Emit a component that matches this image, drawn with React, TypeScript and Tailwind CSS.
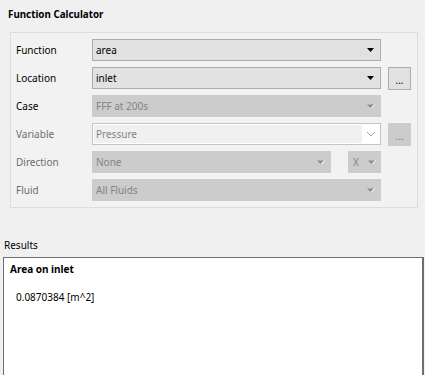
import React from "react";

const Arrow = ({ disabled }: { disabled?: boolean }) => (
  <svg width="9" height="6" viewBox="0 0 9 6" className="shrink-0">
    {disabled ? (
      <>
        <path d="M1 1.5 L8 1.5 L4.5 5 Z" fill="#8e8e8e" />
        <path d="M5.5 5 L8.5 1.5" stroke="#ffffff" strokeWidth="1" />
      </>
    ) : (
      <path d="M1 1 L8 1 L4.5 5 Z" fill="#000000" />
    )}
  </svg>
);

const Combo = ({
  text,
  disabled,
  width,
}: {
  text: string;
  disabled?: boolean;
  width: string;
}) => (
  <div
    className={`${width} h-[22px] flex items-center justify-between pl-[3px] pr-[5px] border ${
      disabled ? "bg-[#cccccc] border-[#cccccc] text-[#838383]" : "bg-[#e1e1e1] border-[#adadad] text-black"
    }`}
  >
    <span>{text}</span>
    <Arrow disabled={disabled} />
  </div>
);

const Dots = ({ disabled }: { disabled?: boolean }) => (
  <div
    className={`w-[23px] h-[23px] flex items-center justify-center border text-[10px] leading-none ${
      disabled ? "bg-[#cccccc] border-[#cccccc] text-[#838383]" : "bg-[#e1e1e1] border-[#adadad] text-black"
    }`}
  >
    <span className="pt-[4px]">...</span>
  </div>
);

const Row = ({
  label,
  disabled,
  children,
}: {
  label: string;
  disabled?: boolean;
  children: React.ReactNode;
}) => (
  <div className="flex items-center h-[22px]">
    <div className={`w-[76px] ${disabled ? "text-[#6d6d6d]" : "text-black"}`}>{label}</div>
    {children}
  </div>
);

export default function App() {
  return (
    <div
      className="w-[425px] h-[375px] bg-[#f0f0f0] overflow-hidden text-[10px] leading-[14px] text-black"
      style={{ fontFamily: '"Noto Sans", "Open Sans", sans-serif' }}
    >
      <div className="pl-[8px] pt-[8px] h-[32px] font-bold text-[9.8px]">Function Calculator</div>
      <div className="ml-[10px] w-[408px] h-[176px] border border-[#dcdcdc] bg-[#f2f2f2] pl-[5px] pt-[6px] flex flex-col gap-[6px]">
        <Row label="Function">
          <Combo text="area" width="w-[289px]" />
        </Row>
        <Row label="Location">
          <Combo text="inlet" width="w-[289px]" />
          <div className="ml-[7px]">
            <Dots />
          </div>
        </Row>
        <Row label="Case">
          <Combo text="FFF at 200s" disabled width="w-[289px]" />
        </Row>
        <Row label="Variable" disabled>
          <div className="w-[289px] h-[22px] flex items-center border border-[#c4c4c4] bg-white p-[1px]">
            <div className="w-[268px] h-full bg-[#f0f0f0] pl-[2px] flex items-center text-[#838383]">Pressure</div>
            <div className="flex-1 flex items-center justify-center">
              <svg width="10" height="6" viewBox="0 0 10 6">
                <path d="M1 1 L5 5 L9 1" fill="none" stroke="#a0a0a0" strokeWidth="1" />
              </svg>
            </div>
          </div>
          <div className="ml-[7px]">
            <Dots disabled />
          </div>
        </Row>
        <Row label="Direction" disabled>
          <Combo text="None" disabled width="w-[239px]" />
          <div className="ml-[17px] w-[33px] h-[22px] bg-[#cccccc] flex items-center justify-between pl-[5px] pr-[5px] text-[#838383]">
            <span>X</span>
            <Arrow disabled />
          </div>
        </Row>
        <Row label="Fluid" disabled>
          <Combo text="All Fluids" disabled width="w-[289px]" />
        </Row>
      </div>
      <div className="pl-[4px] pt-[30px] h-[49px]">Results</div>
      <div className="ml-[3px] w-[421px] h-[130px] bg-white border border-[#6e6e6e] border-r-2 pl-[6px] pt-[4px]">
        <div className="font-bold">Area on inlet</div>
        <div className="pl-[6px] mt-[14px]">0.0870384 [m^2]</div>
      </div>
    </div>
  );
}
